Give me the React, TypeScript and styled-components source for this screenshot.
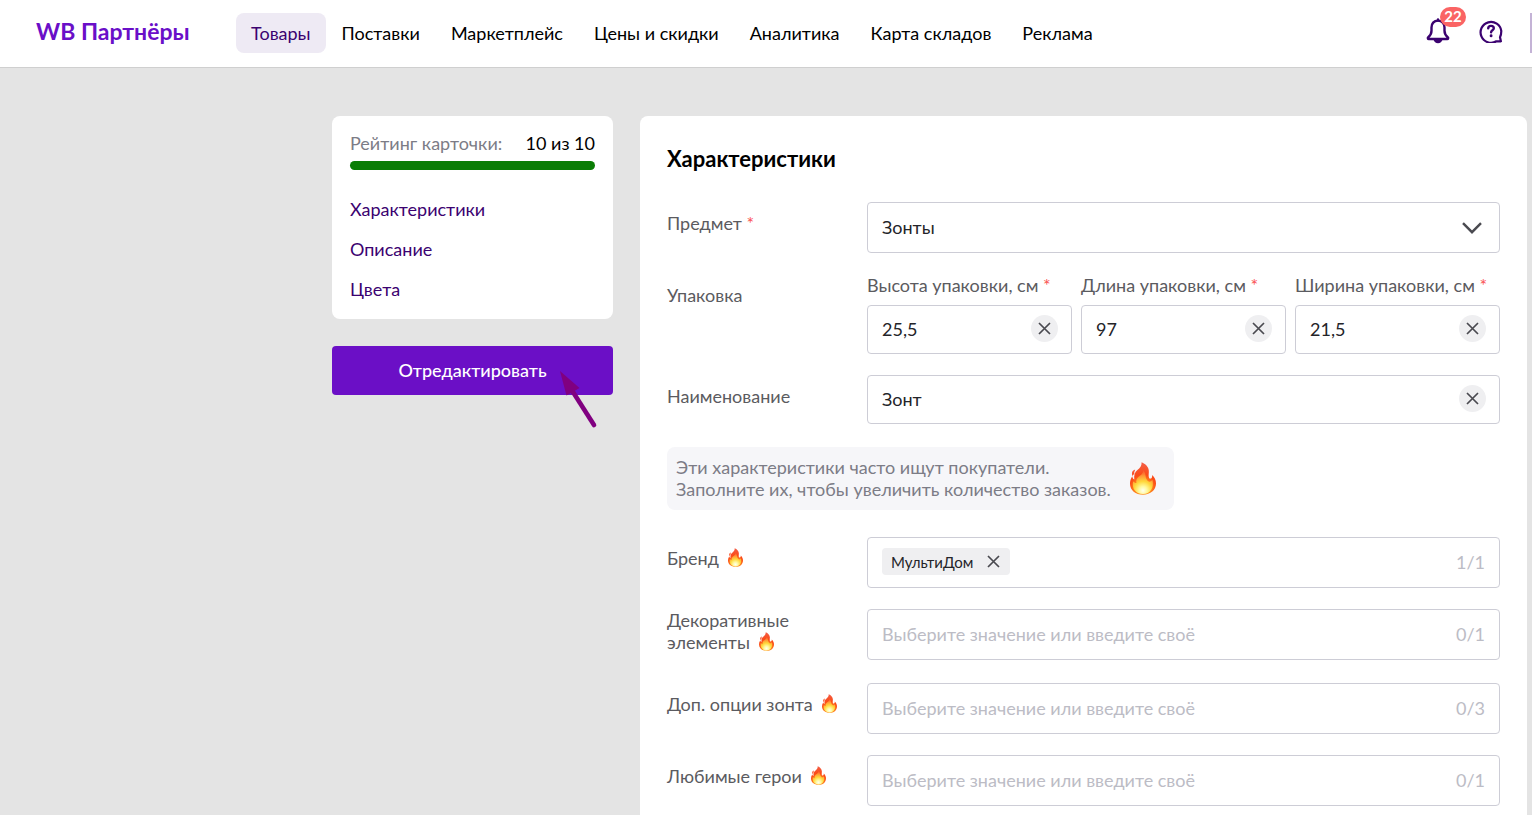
import React, { useId } from "react";
import styled, { createGlobalStyle } from "styled-components";

const GlobalStyle = createGlobalStyle`
  *, *::before, *::after { box-sizing: border-box; }
  body {
    margin: 0;
    background: #e4e4e4;
    color: #000;
    font-family: Lato, "Noto Sans", sans-serif;
    font-size: 18px;
    line-height: 22px;
  }
  button, input, select { font: inherit; color: inherit; margin: 0; }
  button { cursor: pointer; border: 0; padding: 0; }
`;

const Page = styled.div`
  display: flex;
  flex-direction: column;
  min-height: 100vh;
`;

const Header = styled.header`
  display: flex;
  align-items: center;
  height: 68px;
  padding: 0 0 2px 36px;
  background: #fff;
  border-bottom: 1px solid #cfcfcf;
`;

const Logo = styled.a`
  width: 200px;
  flex: none;
  padding-bottom: 4px;
  color: #6a0fc8;
  font-size: 23px;
  font-weight: 700;
  text-decoration: none;
  white-space: nowrap;
`;

const Nav = styled.nav`
  display: flex;
  gap: 1px;
`;

const NavLink = styled.a<{ $active?: boolean }>`
  height: 40px;
  padding: 0 15px;
  border-radius: 8px;
  line-height: 40px;
  white-space: nowrap;
  text-decoration: none;
  color: ${(p) => (p.$active ? "#3b0270" : "#000")};
  background: ${(p) => (p.$active ? "#eeeaf4" : "transparent")};
`;

const Tools = styled.div`
  display: flex;
  align-items: center;
  gap: 28px;
  height: 40px;
  margin-left: auto;
  padding: 0 27px 3px 0;
  border-right: 2px solid #c4b3d6;
`;

const IconButton = styled.button`
  position: relative;
  display: flex;
  background: none;
  color: #3b0270;
`;

const Badge = styled.span`
  position: absolute;
  left: 15px;
  top: -11px;
  width: 26px;
  height: 20px;
  border-radius: 10px;
  background: #fa6464;
  color: #fff;
  font-size: 15px;
  font-weight: 700;
  line-height: 19px;
  text-align: center;
`;

const Content = styled.div`
  display: flex;
  flex: 1;
  gap: 27px;
  padding: 48px 5px 0 332px;
`;

const Side = styled.aside`
  width: 281px;
  flex: none;
`;

const SideCard = styled.section`
  height: 203px;
  padding: 16px 18px;
  border-radius: 8px;
  background: #fff;
`;

const Rating = styled.div`
  display: flex;
  justify-content: space-between;
`;

const Muted = styled.span`
  color: #7c7c86;
`;

const Meter = styled.div`
  height: 9px;
  margin-top: 7px;
  border-radius: 5px;
  background: #0a7d05;
`;

const SideNav = styled.nav`
  display: flex;
  flex-direction: column;
  align-items: flex-start;
  gap: 18px;
  margin-top: 28px;
`;

const SideLink = styled.a`
  color: #3b0270;
  text-decoration: none;
`;

const ButtonHolder = styled.div`
  position: relative;
  margin-top: 27px;
`;

const EditButton = styled.button`
  width: 100%;
  height: 49px;
  padding-bottom: 2px;
  border-radius: 4px;
  background: #6b0fc6;
  color: #fff;
  font-weight: 500;
`;

const Pointer = styled.svg`
  position: absolute;
  left: 226px;
  top: 23px;
  pointer-events: none;
`;

const Main = styled.main`
  flex: 1;
  min-width: 0;
  padding: 32px 27px 9px;
  border-radius: 8px 8px 0 0;
  background: #fff;
`;

const Title = styled.h1`
  margin: 0 0 32px;
  font-size: 22px;
  line-height: 22px;
  font-weight: 700;
`;

const Rows = styled.div`
  display: flex;
  flex-direction: column;
  gap: 21px;
`;

const Row = styled.div`
  display: flex;
  align-items: flex-start;
`;

const Label = styled.label<{ $tall?: boolean }>`
  width: 200px;
  flex: none;
  padding: ${(p) => (p.$tall ? "0 60px 9px 0" : "10px 0 0")};
  color: #5b5b60;
`;

const Star = styled.span`
  color: #fa5252;
`;

const Sizes = styled.div`
  display: grid;
  grid-template-columns: repeat(3, 1fr);
  gap: 9px;
  flex: 1;
  min-width: 0;
`;

const SizeLabel = styled.label`
  display: block;
  margin-bottom: 9px;
  color: #5b5b60;
  white-space: nowrap;
`;

const Box = styled.div<{ $large?: boolean }>`
  position: relative;
  display: flex;
  align-items: center;
  flex: 1;
  min-width: 0;
  height: ${(p) => (p.$large ? 51 : 49)}px;
  padding: 0 14px 2px;
  border: 1px solid #cdcdd6;
  border-radius: 4px;
  background: #fff;
  color: #242429;
`;

const Input = styled.input`
  flex: 1;
  min-width: 0;
  width: 0;
  height: 100%;
  padding: 0;
  border: 0;
  outline: 0;
  background: transparent;
  &::placeholder { color: #bcbcc5; opacity: 1; }
`;

const Select = styled.select`
  flex: 1;
  height: 100%;
  padding: 0;
  border: 0;
  outline: 0;
  appearance: none;
  background: transparent;
`;

const Chevron = styled.svg`
  position: absolute;
  right: 17px;
  top: 19px;
  pointer-events: none;
`;

const Clear = styled.button`
  display: flex;
  align-items: center;
  justify-content: center;
  width: 27px;
  height: 27px;
  margin-right: -1px;
  border-radius: 50%;
  background: #efeff1;
`;

const Count = styled.span`
  color: #bcbcc5;
`;

const Chip = styled.span`
  display: flex;
  align-items: center;
  gap: 14px;
  height: 27px;
  padding: 0 10px 0 9px;
  margin-right: 8px;
  border-radius: 4px;
  background: #efeff1;
  font-size: 15px;
`;

const ChipButton = styled.button`
  display: flex;
  background: none;
`;

const Notice = styled.div`
  display: flex;
  align-items: center;
  gap: 19px;
  width: fit-content;
  margin: 2px 0 6px;
  padding: 9px 18px 10px 9px;
  border-radius: 8px;
  background: #f6f6f9;
  color: #7c7c86;
`;

const FlameSvg = styled.svg<{ $inline?: boolean }>`
  flex: none;
  margin-left: ${(p) => (p.$inline ? "9px" : "0")};
  vertical-align: ${(p) => (p.$inline ? "-2px" : "0")};
`;

function Flame({ width, height, inline }: { width: number; height: number; inline?: boolean }) {
  const id = useId();
  return (
    <FlameSvg width={width} height={height} viewBox="0 0 26 33" $inline={inline} aria-hidden="true">
      <defs>
        <radialGradient id={id + "a"} gradientUnits="userSpaceOnUse" cx="13" cy="26" r="26">
          <stop offset="0" stopColor="#ffc93a" />
          <stop offset="0.3" stopColor="#ff8a1e" />
          <stop offset="0.52" stopColor="#fb4a16" />
          <stop offset="1" stopColor="#f2604c" />
        </radialGradient>
        <radialGradient id={id + "b"} gradientUnits="userSpaceOnUse" cx="13" cy="28.500" r="20">
          <stop offset="0" stopColor="#fffff0" />
          <stop offset="0.2" stopColor="#fff9a0" />
          <stop offset="0.45" stopColor="#ffd83c" />
          <stop offset="0.75" stopColor="#ffa03c" stopOpacity="0.8" />
          <stop offset="1" stopColor="#ff9050" stopOpacity="0.1" />
        </radialGradient>
      </defs>
      <path
        fill={`url(#${id}a)`}
        d="M11.600.3c3.900 1.500 6.800 4.500 7.200 8.200.3 2.600-.7 4.800.2 7.200.3.800 1 1.200 1.700.9 1.300-.5 1.600-2 1.400-3.700 2.500 2 3.900 5 3.900 8.600C26 28 20.500 32.700 13 32.700S0 28.200 0 21.700c0-2.700.7-5.200 2.300-7.500.1 1.600.8 2.700 2 3.300-.4-4.200.3-7.200 3.100-9.400 2.600-2 4.400-4.300 4.200-7.800zM5.200 7.600c-.6 2-1.200 2.500-.9 4.600-1.100.3-1.500 1-1.800 2.100C1.300 10.900 2.200 8.400 5.200 7.600z"
      />
      <path
        fill={`url(#${id}b)`}
        d="M13.300 8.200c2.700 2.900 1.800 5.300 3 8.600.6 1.600 1.700 2.500 2.900 3 1.300-.2 2.400-.9 3.200-2.100C24.400 25.500 20.600 32 13 32S1.600 26.300 3.200 19.200c.8 1 1.900 1.700 3.200 1.900-.5-2.900.5-4.900 2.300-6.300 2.200-1.700 4.300-3.300 4.600-6.600z"
      />
    </FlameSvg>
  );
}

function Cross() {
  return (
    <svg width="13" height="13" viewBox="0 0 13 13" fill="none" stroke="#4a4a50" strokeWidth="1.7" aria-hidden="true">
      <path d="M1 1l11 11M12 1L1 12" />
    </svg>
  );
}

const menu = ["Товары", "Поставки", "Маркетплейс", "Цены и скидки", "Аналитика", "Карта складов", "Реклама"];

const sizes = [
  { id: "height", label: "Высота упаковки, см", value: "25,5" },
  { id: "length", label: "Длина упаковки, см", value: "97" },
  { id: "width", label: "Ширина упаковки, см", value: "21,5" },
];

const options = [
  { id: "decor", label: "Декоративные элементы", count: "0/1", tall: true },
  { id: "extra", label: "Доп. опции зонта", count: "0/3" },
  { id: "heroes", label: "Любимые герои", count: "0/1" },
];

export default function App() {
  return (
    <Page>
      <GlobalStyle />
      <Header>
        <Logo href="#">WB Партнёры</Logo>
        <Nav>
          {menu.map((item, i) => (
            <NavLink key={item} href="#" $active={i === 0}>{item}</NavLink>
          ))}
        </Nav>
        <Tools>
          <IconButton aria-label="Уведомления">
            <svg width="26" height="26" viewBox="0 0 26 26" fill="none" stroke="currentColor" strokeWidth="2.4" strokeLinejoin="round" strokeLinecap="round">
              <path d="M13 2.600C8.800 2.600 6.500 5.800 6.500 9.500v3.300c0 2.700-1 4.600-3.200 6.400-.8.700-.5 1.800.5 1.800h18.400c1 0 1.300-1.100.5-1.800-2.200-1.800-3.200-3.700-3.200-6.400V9.500c0-3.700-2.300-6.900-6.500-6.900z" />
              <path d="M13 1.500v1" />
              <path fill="currentColor" stroke="none" d="M8.500 21.500h9c-.5 2.400-2.300 3.800-4.500 3.800s-4-1.400-4.500-3.800z" />
            </svg>
            <Badge>22</Badge>
          </IconButton>
          <IconButton aria-label="Помощь">
            <svg width="24" height="24" viewBox="0 0 24 24" fill="none" stroke="currentColor" strokeWidth="2.200" strokeLinejoin="round" strokeLinecap="round">
              <path d="M21.900 22.300h-4.600A10.400 10.400 0 1 1 22.300 12c0 2.200-.3 4.200-1.300 6.200z" />
              <path d="M9.200 9.300c.1-1.500 1.200-2.400 2.800-2.400s2.800 1 2.800 2.400c0 2-2.700 2-2.700 4" strokeWidth="2.400" />
              <path d="M12.100 16.700v.2" strokeWidth="2.800" />
            </svg>
          </IconButton>
        </Tools>
      </Header>

      <Content>
        <Side>
          <SideCard>
            <Rating>
              <Muted>Рейтинг карточки:</Muted>
              <span>10 из 10</span>
            </Rating>
            <Meter role="meter" aria-label="Рейтинг карточки" aria-valuemin={0} aria-valuemax={10} aria-valuenow={10} />
            <SideNav>
              <SideLink href="#features">Характеристики</SideLink>
              <SideLink href="#description">Описание</SideLink>
              <SideLink href="#colors">Цвета</SideLink>
            </SideNav>
          </SideCard>
          <ButtonHolder>
            <EditButton>Отредактировать</EditButton>
            <Pointer width="40" height="60" viewBox="0 0 40 60" aria-hidden="true">
              <path d="M15 23L36 56" stroke="#800080" strokeWidth="4.600" strokeLinecap="round" />
              <path d="M2 2l19.500 17L8.500 26.500z" fill="#800080" />
            </Pointer>
          </ButtonHolder>
        </Side>

        <Main>
          <Title id="features">Характеристики</Title>
          <Rows>
            <Row>
              <Label htmlFor="subject">Предмет <Star>*</Star></Label>
              <Box $large>
                <Select id="subject" defaultValue="Зонты">
                  <option>Зонты</option>
                </Select>
                <Chevron width="20" height="12" viewBox="0 0 20 12" fill="none" stroke="#4a4a50" strokeWidth="2.400">
                  <path d="M1 1.200l9 9 9-9" />
                </Chevron>
              </Box>
            </Row>
            <Row>
              <Label as="span">Упаковка</Label>
              <Sizes>
                {sizes.map((s) => (
                  <div key={s.id}>
                    <SizeLabel htmlFor={s.id}>{s.label} <Star>*</Star></SizeLabel>
                    <Box>
                      <Input id={s.id} defaultValue={s.value} />
                      <Clear aria-label="Очистить"><Cross /></Clear>
                    </Box>
                  </div>
                ))}
              </Sizes>
            </Row>
            <Row>
              <Label htmlFor="name">Наименование</Label>
              <Box>
                <Input id="name" defaultValue="Зонт" />
                <Clear aria-label="Очистить"><Cross /></Clear>
              </Box>
            </Row>
            <Notice>
              <span>
                Эти характеристики часто ищут покупатели.
                <br />
                Заполните их, чтобы увеличить количество заказов.
              </span>
              <Flame width={26} height={33} />
            </Notice>
            <Row>
              <Label htmlFor="brand">Бренд<Flame width={15} height={19} inline /></Label>
              <Box $large>
                <Chip>
                  МультиДом
                  <ChipButton aria-label="Удалить"><Cross /></ChipButton>
                </Chip>
                <Input id="brand" />
                <Count>1/1</Count>
              </Box>
            </Row>
            {options.map((o) => (
              <Row key={o.id}>
                <Label htmlFor={o.id} $tall={o.tall}>
                  {o.label}<Flame width={15} height={19} inline />
                </Label>
                <Box $large>
                  <Input id={o.id} placeholder="Выберите значение или введите своё" />
                  <Count>{o.count}</Count>
                </Box>
              </Row>
            ))}
          </Rows>
        </Main>
      </Content>
    </Page>
  );
}
